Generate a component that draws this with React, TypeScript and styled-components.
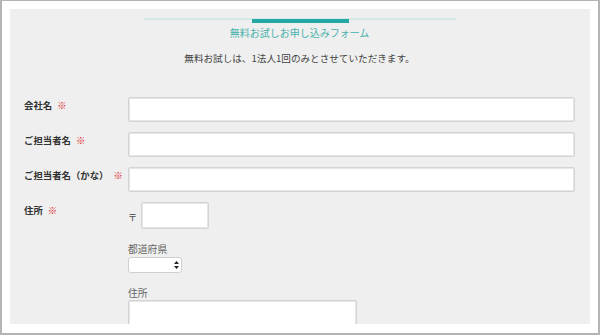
import React from "react";
import styled, { createGlobalStyle } from "styled-components";

const GlobalStyle = createGlobalStyle`
  html, body { margin: 0; padding: 0; background: #fff; }
  body { font-family: "Noto Sans CJK JP", "Noto Sans", sans-serif; }
  * { box-sizing: border-box; }
`;

const Frame = styled.div`
  width: 600px;
  height: 335px;
  border: 2px solid #b4b4b4;
  border-top-width: 1px;
  padding: 8px 8px 8px 8px;
  background: #fff;
  overflow: hidden;
`;

const Panel = styled.div`
  height: 315px;
  background: #eeefee;
  overflow: hidden;
  padding: 9px 15px 0 14px;
`;

const HeadRule = styled.div`
  position: relative;
  width: 312px;
  height: 4px;
  margin: 0 auto;
  border-top: 2px solid #d2e9e8;
`;

const HeadAccent = styled.span`
  position: absolute;
  left: 50%;
  top: -1px;
  width: 97px;
  height: 4px;
  margin-left: -48px;
  background: #23a8a3;
`;

const Title = styled.h2`
  margin: 4px 0 0;
  text-align: center;
  font-size: 10px;
  line-height: 14px;
  font-weight: 400;
  color: #48b2ad;
`;

const Lead = styled.p`
  margin: 11px 0 0;
  text-align: center;
  font-size: 9.6px;
  line-height: 14px;
  color: #444;
`;

const Form = styled.form`
  margin-top: 32px;
  display: flex;
  flex-direction: column;
  gap: 10px;
`;

const Row = styled.div`
  display: grid;
  grid-template-columns: 104px 1fr;
  align-items: start;
`;

const Label = styled.label`
  margin-top: 1px;
  font-size: 9.4px;
  line-height: 14px;
  font-weight: 700;
  color: #333;
  white-space: nowrap;
`;

const Req = styled.span`
  margin-left: 5px;
  color: #e0262b;
  font-weight: 400;
`;

const TextInput = styled.input<{ $w?: number; $h?: number }>`
  display: block;
  width: ${(p) => (p.$w ? `${p.$w}px` : "100%")};
  height: ${(p) => p.$h ?? 25}px;
  margin: 0;
  padding: 0 6px;
  background: #fff;
  border: 1px solid #d4d4d4;
  box-shadow: 0 0 0 1px #e6e6e6 inset;
  border-radius: 2px;
  font-family: inherit;
  font-size: 10px;
  outline: none;
`;

const AddressCol = styled.div`
  display: flex;
  flex-direction: column;
`;

const PostalLine = styled.div`
  display: flex;
  align-items: center;
  gap: 4px;
  margin-bottom: 13px;
`;

const PostMark = styled.span`
  font-size: 9px;
  color: #444;
  margin-top: 3px;
`;

const SubLabel = styled.span<{ $mb?: number }>`
  font-size: 9.8px;
  line-height: 14px;
  color: #666;
  margin-bottom: ${(p) => p.$mb ?? 0}px;
`;

const SelectWrap = styled.div`
  position: relative;
  width: 54px;
  height: 16px;
  margin-bottom: 13px;
`;

const Select = styled.select`
  appearance: none;
  -webkit-appearance: none;
  display: block;
  width: 100%;
  height: 100%;
  margin: 0;
  padding: 0 12px 0 4px;
  background: #fff;
  border: 1px solid #d0d0d0;
  border-radius: 3px;
  font-family: inherit;
  font-size: 9px;
  outline: none;
`;

const Arrows = styled.svg`
  position: absolute;
  right: 3px;
  top: 4px;
  pointer-events: none;
`;

const TextArea = styled.textarea`
  display: block;
  width: 229px;
  height: 60px;
  margin: 0;
  background: #fff;
  border: 1px solid #d4d4d4;
  box-shadow: 0 0 0 1px #e6e6e6 inset;
  border-radius: 2px;
  resize: none;
  outline: none;
`;

export default function App() {
  return (
    <>
      <GlobalStyle />
      <Frame>
        <Panel>
          <HeadRule>
            <HeadAccent />
          </HeadRule>
          <Title>無料お試しお申し込みフォーム</Title>
          <Lead>無料お試しは、1法人1回のみとさせていただきます。</Lead>
          <Form onSubmit={(e) => e.preventDefault()}>
            <Row>
              <Label>
                会社名<Req>※</Req>
              </Label>
              <TextInput type="text" />
            </Row>
            <Row>
              <Label>
                ご担当者名<Req>※</Req>
              </Label>
              <TextInput type="text" />
            </Row>
            <Row>
              <Label>
                ご担当者名（かな）<Req>※</Req>
              </Label>
              <TextInput type="text" />
            </Row>
            <Row>
              <Label>
                住所<Req>※</Req>
              </Label>
              <AddressCol>
                <PostalLine>
                  <PostMark>〒</PostMark>
                  <TextInput type="text" $w={68} $h={27} />
                </PostalLine>
                <SubLabel $mb={1}>都道府県</SubLabel>
                <SelectWrap>
                  <Select defaultValue="">
                    <option value=""></option>
                  </Select>
                  <Arrows width="5" height="8" viewBox="0 0 5 8">
                    <path d="M2.5 0 L5 3 L0 3 Z M0 5 L5 5 L2.5 8 Z" fill="#222" />
                  </Arrows>
                </SelectWrap>
                <SubLabel>住所</SubLabel>
                <TextArea />
              </AddressCol>
            </Row>
          </Form>
        </Panel>
      </Frame>
    </>
  );
}
